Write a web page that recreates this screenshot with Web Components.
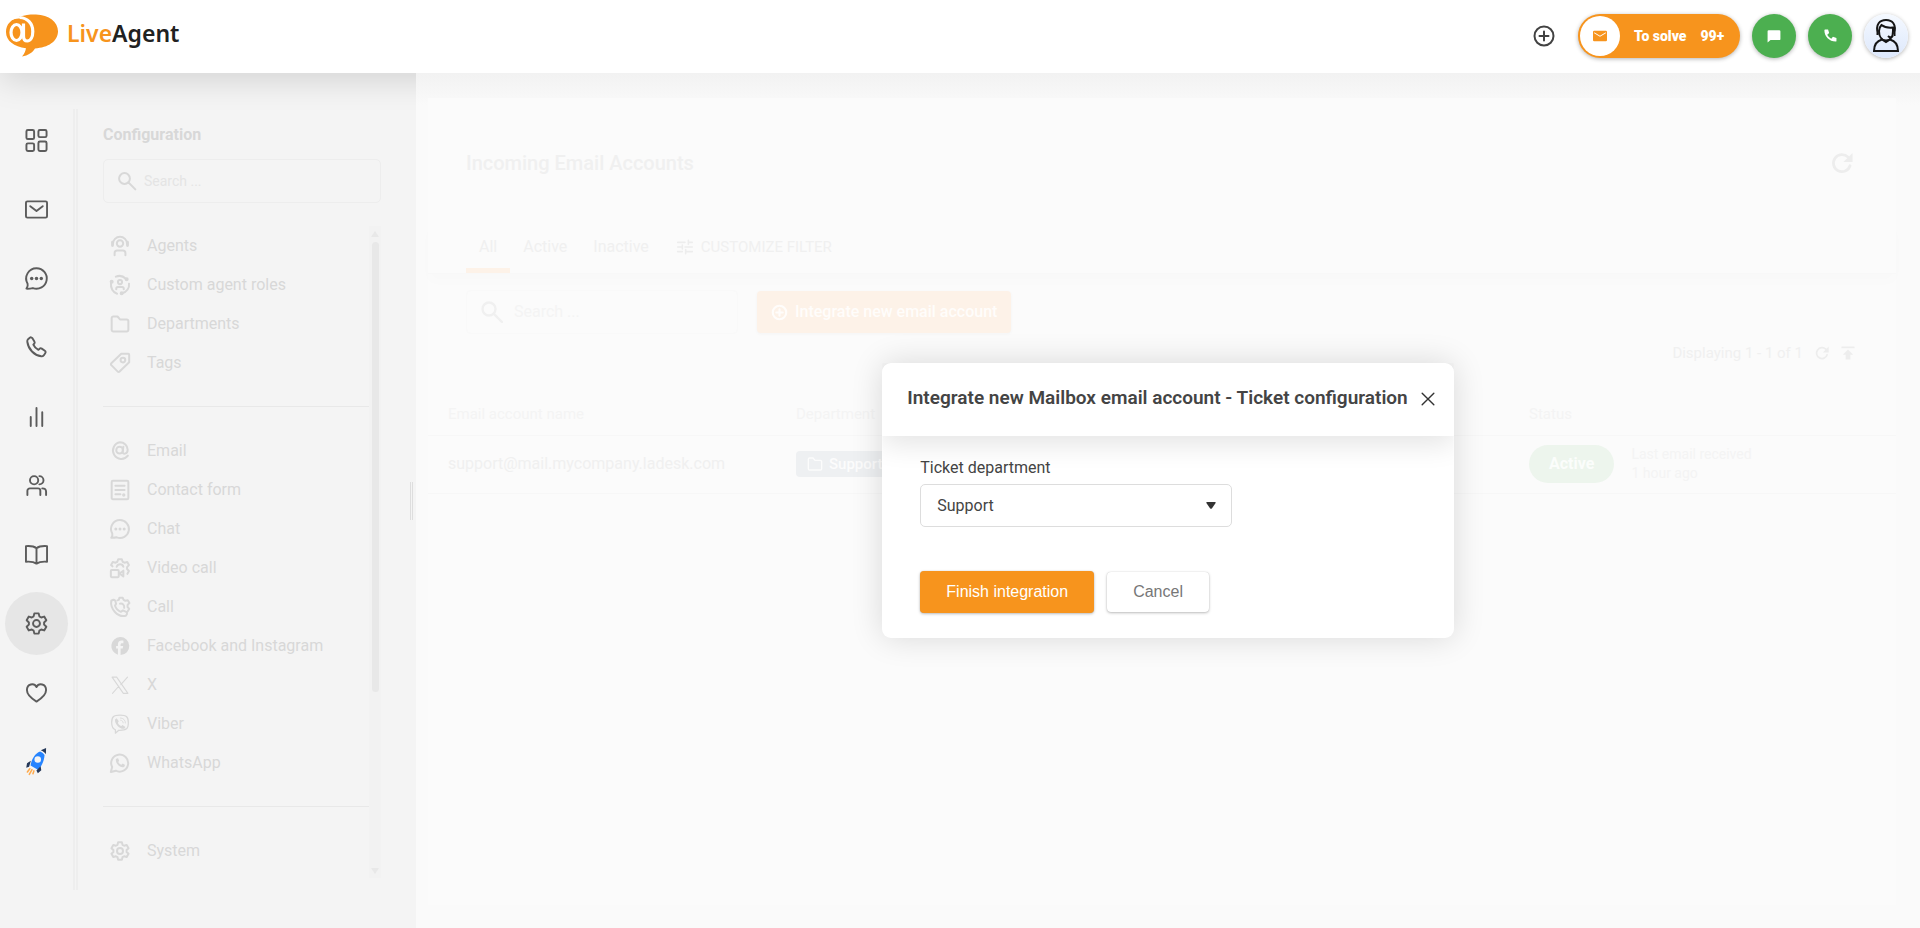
<!DOCTYPE html>
<html lang="en">
<head>
<meta charset="utf-8">
<title>LiveAgent</title>
<style>
  html, body {
    height: 100%;
    margin: 0;
  }

  body {
    font-family: Roboto, "Liberation Sans", sans-serif;
    font-size: 16px;
    line-height: 20px;
    color: #444;
    overflow: hidden;
  }
</style>
</head>
<body>
<la-app></la-app>

<script>
// Outline of a cog with six teeth, centred on the 24x24 grid.
function gearPath() {
  const points = [];
  for (let tooth = 0; tooth < 6; tooth++) {
    for (const [offset, radius] of [[-22, 8], [-12, 10.8], [12, 10.8], [22, 8]]) {
      const angle = (tooth * 60 + offset) * Math.PI / 180;
      points.push(`${(12 + radius * Math.sin(angle)).toFixed(2)} ${(12 - radius * Math.cos(angle)).toFixed(2)}`);
    }
  }
  return `<path d="M${points.join("L")}z"/>`;
}

const HANDSET = '<path d="M3.200 3.300l1.800-1.500c.9-.7 2-.5 2.600.4l2.200 3.500c.5.800.4 1.700-.2 2.400l-.9 1c.9 2.200 3 4.200 5.300 5.300l1-.9c.7-.7 1.700-.8 2.500-.3l3.200 2.200c.9.600 1.100 1.700.4 2.600L19.500 20.300c-.6.700-1.500 1-2.500.9C9.500 20 3.500 14 2.400 6c-.1-1 .1-2 .8-2.700z"/>';
const CHAT = '<path d="M12 1.300a10.700 10.700 0 1 1-3.800 20.700c-1.800.4-4 .7-6.700.6 1.200-1.600 1.700-3.500 1.200-5.200A10.700 10.700 0 0 1 12 1.300z"/><g fill="currentColor" stroke="none"><circle cx="7" cy="12" r="1.800"/><circle cx="12" cy="12" r="1.800"/><circle cx="17" cy="12" r="1.800"/></g>';

// Line icons, drawn on a 24x24 grid with the current colour as stroke.
const ICONS = {
  dashboard: '<rect x="1.500" y="1" width="8" height="9.500" rx="1.500"/><rect x="14" y="1" width="8.500" height="7.500" rx="1.500"/><rect x="1.500" y="15" width="8" height="8" rx="1.500"/><rect x="14" y="13" width="8.500" height="10" rx="1.500"/>',
  mail: '<rect x="1" y="3.500" width="22" height="17" rx="1.500"/><path d="M5.500 8.500l6.500 5 6.500-5"/>',
  chat: CHAT,
  phone: HANDSET,
  chart: '<path d="M6 12.500V22M12 3v19M18 7.500V22"/>',
  users: '<circle cx="9.500" cy="6.500" r="4.300"/><path d="M15 2.200a4.300 4.300 0 0 1 0 8.600M2.500 22v-4.500a2.500 2.500 0 0 1 2.500-2.500h8.500a2.500 2.500 0 0 1 2.500 2.500V22M18 15c2.500 0 4 1 4 3.500V22"/>',
  book: '<path d="M12 5.500C9.500 3.500 5 3 1 3.300V19.500c4-.3 8.500.2 11 2 2.500-1.800 7-2.300 11-2V3.300C19 3 14.500 3.500 12 5.500zM12 5.500v16"/>',
  gear: gearPath() + '<circle cx="12" cy="12" r="3.600"/>',
  heart: '<path d="M12 21.500C7 18.500 2 14.500 2 9.500c0-6.500 7.500-8 10-3.200 2.500-4.800 10-3.300 10 3.200 0 5-5 9-10 12z"/>',
  rocket: '<g transform="translate(0 -1)"><g stroke="none"><path fill="#2684ff" d="M15.800 2.600c2.100 1 3.600 2.100 4.600 3.600-.3 5.300-2.400 10.800-6.500 15.600l-8.100-4.600C6.700 10.900 10.100 4.800 15.800 2.600z"/><path fill="#253858" d="M16.500 1.300L22-1l-.2 6.400c-1-1.700-3-3.200-5.300-4.100zM6.100 12.300l-4 2.500-.8 4.600 3-.9zM16.300 18l.7 4.200-3.600 3-1.500-2.800z"/><circle cx="13.300" cy="11" r="3.400" fill="#f4f4f4"/></g><path stroke="#ffab4d" stroke-width="1.600" d="M5 20.500l-2.500 3.500M7.300 21.500l-2.800 5M9.300 22.800l-1 3"/></g>',
  search: '<circle cx="9" cy="9" r="6.500"/><path d="M13.800 13.800L22 22"/>',
  agent: '<circle cx="12" cy="9" r="3.800"/><path d="M3.500 9.500a8.500 8.500 0 0 1 17 0M5.500 23v-2.500a3 3 0 0 1 3-3h7a3 3 0 0 1 3 3V23"/><path stroke-width="3.400" d="M3 7.500v4M21 7.500v4"/>',
  roles: '<circle cx="12" cy="8.500" r="2.500"/><path d="M7.500 17v-.5a2 2 0 0 1 2-2h5a2 2 0 0 1 2 2v.5M7 2a11 11 0 0 1 12 2.500M22.800 10.500c.7 4.500-2.500 10-8.300 11.500M8.500 22.500C3.500 21 .5 15.500 1.200 9.500"/><g fill="currentColor"><circle cx="20" cy="5" r="1.200"/><circle cx="14" cy="22" r="1.200"/><circle cx="2" cy="8" r="1.200"/></g>',
  folder: '<path d="M2 5A2 2 0 0 1 4 3h5l3 3.500h8a2 2 0 0 1 2 2V19a2 2 0 0 1-2 2H4a2 2 0 0 1-2-2z"/>',
  tag: '<path d="M13.500 1H22a1 1 0 0 1 1 1V11L11.500 22.300a1.500 1.500 0 0 1-2.200 0L1.600 14.600a1.500 1.500 0 0 1 0-2.200z"/><circle cx="15.500" cy="8.500" r="2.800"/>',
  at: '<circle cx="11.500" cy="11" r="4"/><path d="M16 7l-.8 6c-.4 3.500 6 3 6-2.500C21.200 5.500 17 1.600 12 1.600a10 10 0 1 0 9.500 16"/>',
  form: '<rect x="2" y="1" width="20" height="22" rx="1.500"/><path d="M6.500 7h11M6.500 12h11M6.500 17h6"/><circle cx="16.500" cy="18" r=".8" fill="currentColor"/>',
  video: '<path d="M3 10L1.300 8.500l2-3.600 3.500.7 2-1.100 1-3h4.400l1 3 2 1.100 3.500-.7 2 3.600-2.200 2.400v2.300l2.200 2.400-1.800 3.400M8 10.500c1.500-4 7-4 8 0"/><rect x="1" y="14.500" width="9.500" height="8.500" rx="1"/><path d="M11.500 18.700l4.500-3.500v7z"/>',
  call: '<path d="M1.500 4.500L4 3.300c1-.2 2 .5 2.300 1.300l1 3.400L6 10.500c1 3 4 6 7 7.300l2.500-1.700 3.900 1.700c1 .6 1.300 1.600 1 2.600L19 22.500C9 25 0 14 1.500 4.500zM9 4l1.500-.5.8-2.500h4l1 2.500 2 1 3-.7 2 3.400-2.200 2.300v2.500l2 2.200-1.800 3M12 8c3.500-.5 5.500 2 5 5"/>',
  facebook: '<path fill="currentColor" stroke="none" d="M12 1.200a10.800 10.800 0 0 0-2.500 21.200V15H7.300v-3h2.200v-1.700c0-3.300 1.600-4.800 4.700-4.800.6 0 1.500.1 1.900.2v2.900h-1.400c-1.500 0-2 .6-2 2V12h3.100l-.6 3h-2.500v7.800A10.800 10.800 0 0 0 12 1.200z"/>',
  x: '<path stroke-width="1.300" d="M2.500 2.500h5.500L21.500 22H16zM21 2.500l-8 9M10.500 13.500L3 22"/>',
  viber: '<path stroke-width="1.500" d="M12 1.300c-8 0-10 2.200-10 9 0 5.500 1.200 7.500 4.500 8.700v4l4-3.500c9.500.3 11.500-1.700 11.500-9.200 0-6.800-2-9-10-9z"/><path stroke="none" fill="currentColor" d="M6 6.500l2-1.300 2.500 3.500-1 1.700c.6 2 2 3.400 4 4.100l1.600-1.300 3.400 2.300-1.300 2.200C11.500 18.500 5.500 12 6 6.500z"/><path stroke-width="1" d="M12.500 4.800c3.500 0 6 2.500 6 6M12.800 7.500c2 .2 3 1.200 3 3.200"/>',
  whatsapp: '<path d="M1 22.800l1.600-5.900A10.200 10.200 0 1 1 7 21.200z"/><path stroke="none" fill="currentColor" d="M7 7.500l1.500-1.200 1.400.3 1 2.700-1 1.500c1 1.700 2 2.600 3.800 3.400l1.500-1.500 2.600 1.300c.3 2-1 3-2.800 3C11 17 6.500 12 7 7.500z"/>',
  plus: '<circle cx="12" cy="12" r="9.500"/><path d="M12 7.500v9M7.500 12h9"/>',
  tune: '<path d="M1 5h11M17 5h6M17 2v6M1 12h6M12 12h11M8 9v6M1 19h7M13 19h10M13 16v6"/>',
  refresh: '<path d="M20.800 15A9.300 9.300 0 1 1 18.500 5.500"/><path stroke="none" fill="currentColor" d="M23.500 1V11h-10z"/>',
  top: '<path d="M2 2.500h20"/><path stroke="none" fill="currentColor" d="M12 6l9 9h-5v8H8v-8H3z"/>',
  close: '<path d="M2 2l20 20M22 2L2 22"/>',
  envelope: '<path stroke="none" fill="currentColor" fill-rule="evenodd" d="M2 3h20a2 2 0 0 1 2 2v14a2 2 0 0 1-2 2H2a2 2 0 0 1-2-2V5a2 2 0 0 1 2-2zm0 2.500v1.800l10 6 10-6V5.500l-10 6z"/>',
  bubble: '<path stroke="none" fill="currentColor" d="M3 2h18a2 2 0 0 1 2 2v13a2 2 0 0 1-2 2H6l-5 4V4a2 2 0 0 1 2-2z"/>',
  handset: '<path stroke="none" fill="currentColor" d="M2 1h5.500l2 6.500-3.500 3c1.500 3 4.500 6 7.500 7.500l3-3.500L23 16.500V22c0 .8-.5 1.300-1.500 1.300C10 23.300.7 14 .7 2.500.7 1.500 1.200 1 2 1z"/>'
};

class Icon extends HTMLElement {
  constructor() {
    super();
    this.attachShadow({mode: "open"});
  }

  connectedCallback() {
    const size = this.getAttribute("size") || 24;
    const weight = this.getAttribute("weight") || 2;
    this.shadowRoot.innerHTML = `
    <style>
      :host {
        display: flex;
        flex: none;
      }

      svg {
        display: block;
        overflow: visible;
        fill: none;
        stroke: currentColor;
        stroke-linecap: round;
        stroke-linejoin: round;
      }
    </style>
    <svg width="${size}" height="${size}" viewBox="0 0 24 24" stroke-width="${weight}" aria-hidden="true">${ICONS[this.getAttribute("name")]}</svg>
    `;
  }
}

class Logo extends HTMLElement {
  constructor() {
    super();
    this.attachShadow({mode: "open"});
    this.shadowRoot.innerHTML = `
    <style>
      :host {
        display: block;
      }

      a {
        display: flex;
        align-items: center;
        gap: 8px;
        color: #212121;
        font: 600 23px/28px "Noto Sans", "Open Sans", sans-serif;
        text-decoration: none;
      }

      .live {
        color: #f7941d;
      }

      .name {
        padding-bottom: 6px;
      }
    </style>
    <a href="#">
      <svg width="53" height="43" viewBox="0 0 53 43" aria-hidden="true">
        <path fill="#f7941d" d="M14 2.500C19 .9 25 .3 30 .5 43 1 52 8 52 17.300c0 10-10 16.500-23 17.100C27 38 22 41.500 16 42.500c2-2.500 3.500-5 4-8.300C8 32.500 0 27 0 18 0 10 5 5.500 14 2.500z"/>
        <g fill="none" stroke="#fff">
          <ellipse cx="10.500" cy="18.500" rx="5.500" ry="8" stroke-width="3.200"/>
          <path stroke-width="3.200" d="M17.500 9.500V22c0 3.500 1.200 5 3.700 5 3.500 0 5.600-4 5.600-9.500 0-8-5.300-13.500-13-14"/>
          <path stroke-width="2" d="M5 5.500C8 3.600 11 3.300 14 3.500"/>
        </g>
      </svg>
      <span class="name"><span class="live">Live</span>Agent</span>
    </a>
    `;
  }
}

class TopBar extends HTMLElement {
  constructor() {
    super();
    this.attachShadow({mode: "open"});
    this.shadowRoot.innerHTML = `
    <style>
      :host {
        display: flex;
        align-items: center;
        justify-content: space-between;
        height: 73px;
        padding: 0 12px 2px 6px;
        box-sizing: border-box;
        background: #fff;
        box-shadow: 0 8px 32px rgba(0, 0, 0, 0.13);
        position: relative;
        z-index: 3;
      }

      .actions {
        display: flex;
        align-items: center;
        gap: 12px;
      }

      button {
        display: flex;
        align-items: center;
        justify-content: center;
        width: 44px;
        height: 44px;
        padding: 0;
        border: 0;
        border-radius: 22px;
        font: inherit;
        color: #fff;
        box-shadow: 0 1px 4px rgba(0, 0, 0, 0.3);
      }

      .add {
        background: none;
        box-shadow: none;
        color: #424242;
      }

      .solve {
        justify-content: flex-start;
        gap: 14px;
        width: 162px;
        padding: 0 2px;
        box-sizing: border-box;
        background: #f7941d;
        font-size: 14px;
        font-weight: 900;
        white-space: nowrap;
      }

      .solve la-icon {
        width: 40px;
        height: 40px;
        align-items: center;
        justify-content: center;
        border-radius: 50%;
        background: #fff;
        color: #f7941d;
      }

      .round {
        background: #4caf50;
      }

      .avatar {
        background: linear-gradient(#f5f9ff, #dde8fc);
      }
    </style>
    <la-logo></la-logo>
    <div class="actions">
      <button class="add" aria-label="Create"><la-icon name="plus" size="24"></la-icon></button>
      <button class="solve"><la-icon name="envelope" size="14"></la-icon><span>To solve</span><span>99+</span></button>
      <button class="round" aria-label="Chats"><la-icon name="bubble" size="14"></la-icon></button>
      <button class="round" aria-label="Calls"><la-icon name="handset" size="13"></la-icon></button>
      <button class="avatar" aria-label="Profile">
        <svg width="28" height="34" viewBox="0 0 28 34" fill="none" stroke="#151515" stroke-width="2" aria-hidden="true">
          <path d="M2 32c0-6 2.500-10 8-11.500L14 23l4-2.500c5.500 1.500 8 5.500 8 11.500z"/>
          <path d="M7 12c0 6 3 9.500 7 9.500s7-3.500 7-9.500V8.500c-5 .5-9-.5-11.500-2.500C8 7.500 7 9 7 12z"/>
          <path d="M6 15C3 5 8 1 14 1s11 4 8 14M22.500 11v6M21 17c-2 2.500-4 1-5 0M5.500 11v5"/>
        </svg>
      </button>
    </div>
    `;
  }
}

class NavRail extends HTMLElement {
  constructor() {
    super();
    this.attachShadow({mode: "open"});
    const items = [
      ["dashboard", "Dashboard"], ["mail", "Tickets"], ["chat", "Chats"], ["phone", "Calls"], ["chart", "Reports"],
      ["users", "Customers"], ["book", "Knowledge base"], ["gear", "Configuration"], ["heart", "Favourites"], ["rocket", "Getting started"]
    ];
    this.shadowRoot.innerHTML = `
    <style>
      :host {
        display: flex;
        padding: 36px 0 38px;
        background: #f4f4f4;
      }

      nav {
        display: flex;
        flex-direction: column;
        gap: 6px;
        padding: 0 5px;
      }

      a {
        display: flex;
        align-items: center;
        justify-content: center;
        width: 63px;
        height: 63px;
        padding-bottom: 1px;
        box-sizing: border-box;
        border-radius: 50%;
        color: #5c5c5c;
      }

      a.active {
        background: #e6e6e6;
      }

      .edge {
        width: 1px;
        border: solid #eee;
        border-width: 0 2px;
      }
    </style>
    <nav>
      ${items.map(([icon, label]) => `<a href="#${icon}" aria-label="${label}"${icon === "gear" ? ' class="active"' : ""}><la-icon name="${icon}" size="23"></la-icon></a>`).join("")}
    </nav>
    <div class="edge"></div>
    `;
  }
}

class SearchBox extends HTMLElement {
  constructor() {
    super();
    this.attachShadow({mode: "open"});
  }

  connectedCallback() {
    this.shadowRoot.innerHTML = `
    <style>
      :host {
        display: flex;
        align-items: center;
        height: 44px;
        gap: var(--gap, 7px);
        padding: 0 13px;
        box-sizing: border-box;
        border: 1px solid var(--line, #ededed);
        border-radius: 5px;
      }

      input {
        flex: 1;
        min-width: 0;
        border: 0;
        padding: 0;
        background: none;
        font: inherit;
        color: inherit;
        outline: none;
      }

      input::placeholder {
        color: var(--hint, #e4e4e4);
        opacity: 1;
      }
    </style>
    <la-icon name="search" size="${this.getAttribute("icon-size") || 20}" weight="2.4"></la-icon>
    <input type="search" placeholder="Search ..." aria-label="Search">
    `;
  }
}

class ConfigMenu extends HTMLElement {
  constructor() {
    super();
    this.attachShadow({mode: "open"});
    const groups = [
      [["agent", "Agents"], ["roles", "Custom agent roles"], ["folder", "Departments"], ["tag", "Tags"]],
      [["at", "Email"], ["form", "Contact form"], ["chat", "Chat"], ["video", "Video call"], ["call", "Call"],
       ["facebook", "Facebook and Instagram"], ["x", "X"], ["viber", "Viber"], ["whatsapp", "WhatsApp"]],
      [["gear", "System"]]
    ];
    this.shadowRoot.innerHTML = `
    <style>
      :host {
        display: flex;
        width: 338px;
        background: #f4f4f4;
        color: #d8d8d8;
      }

      .body {
        flex: 1;
        display: flex;
        flex-direction: column;
        padding: 52px 29px 50px 25px;
      }

      h2 {
        margin: 0 0 14px;
        font-size: 16px;
        font-weight: 700;
      }

      la-search {
        font-size: 14px;
        margin-bottom: 23px;
      }

      .scroller {
        flex: 1;
        min-height: 0;
        display: flex;
      }

      nav {
        flex: 1;
      }

      ul {
        list-style: none;
        margin: 0;
        padding: 0;
      }

      ul + ul {
        margin-top: 24px;
        padding-top: 24px;
        border-top: 1px solid #e8e8e8;
      }

      a {
        display: flex;
        align-items: center;
        gap: 17px;
        height: 39px;
        padding-left: 7px;
        color: inherit;
        text-decoration: none;
      }

      .bar {
        display: flex;
        flex-direction: column;
        align-items: center;
        width: 12px;
        background: #f2f2f2;
      }

      .bar i {
        width: 0;
        height: 0;
        border: 4px solid transparent;
      }

      .bar .up {
        border-bottom: 6px solid #e8e8e8;
        border-top: 0;
        margin: 5px 0;
      }

      .bar .down {
        border-top: 6px solid #e8e8e8;
        border-bottom: 0;
        margin: auto 0 4px;
      }

      .thumb {
        width: 7px;
        flex: 0 0 69%;
        border-radius: 4px;
        background: #e8e8e8;
      }

      .grip {
        align-self: center;
        width: 1px;
        height: 38px;
        margin-right: 3px;
        border: solid #dedede;
        border-width: 0 1px;
      }
    </style>
    <div class="body">
      <h2>Configuration</h2>
      <la-search></la-search>
      <div class="scroller">
        <nav>
          ${groups.map(group => `<ul>${group.map(([icon, label]) => `<li><a href="#${icon}"><la-icon name="${icon}" size="20" weight="2.4"></la-icon>${label}</a></li>`).join("")}</ul>`).join("")}
        </nav>
        <div class="bar"><i class="up"></i><div class="thumb"></div><i class="down"></i></div>
      </div>
    </div>
    <div class="grip"></div>
    `;
  }
}

class AccountsPage extends HTMLElement {
  constructor() {
    super();
    this.attachShadow({mode: "open"});
    this.shadowRoot.innerHTML = `
    <style>
      :host {
        display: block;
        padding: 25px 24px 23px 12px;
        box-sizing: border-box;
        height: 100%;
        background: linear-gradient(#f2f2f2, #fafafa 32px);
        color: #f0f0f0;
      }

      la-icon {
        color: #ededed;
      }

      .panel {
        height: 100%;
        background: #fbfbfb;
      }

      header {
        display: flex;
        align-items: center;
        justify-content: space-between;
        padding: 52px 43px 0 38px;
      }

      h1 {
        margin: 0;
        font-size: 20px;
        line-height: 26px;
        font-weight: 500;
      }

      button {
        display: flex;
        align-items: center;
        border: 0;
        padding: 0;
        background: none;
        color: inherit;
        font: inherit;
      }

      .tabs {
        display: flex;
        margin-top: 45px;
        padding-left: 38px;
        border-bottom: 1px solid #f8f8f8;
        box-shadow: 0 8px 12px rgba(0, 0, 0, 0.01);
      }

      .tabs button {
        height: 52px;
        padding: 4px 13px 0;
        box-sizing: border-box;
        border-bottom: 5px solid transparent;
      }

      .tabs button.active {
        border-bottom-color: #fdf2e8;
      }

      .tabs .filter {
        gap: 8px;
        padding: 4px 15px 0;
        font-size: 15px;
      }

      .tools {
        display: flex;
        align-items: center;
        gap: 19px;
        padding: 16px 38px 0;
      }

      la-search {
        width: 272px;
        --line: #f9f9f9;
        --hint: #f4f4f4;
        --gap: 10px;
      }

      .tools button {
        gap: 7px;
        height: 42px;
        padding: 0 14px;
        border-radius: 4px;
        background: #fdf2e8;
        color: #fffdfb;
        font-weight: 500;
        box-shadow: 0 1px 3px #f4f4f4;
      }

      .tools button la-icon, .tag la-icon {
        color: inherit;
      }

      .paging {
        display: flex;
        align-items: center;
        justify-content: flex-end;
        gap: 12px;
        padding: 9px 41px 0;
        font-size: 15px;
      }

      table {
        width: 100%;
        margin-top: 30px;
        border-collapse: collapse;
        table-layout: fixed;
        text-align: left;
      }

      th, td {
        padding: 0 0 0 20px;
        box-sizing: border-box;
        border-bottom: 1px solid #f7f7f7;
      }

      th {
        height: 42px;
        font-size: 15px;
        font-weight: 400;
        color: #f4f4f4;
      }

      .name {
        width: 348px;
      }

      .state {
        width: 387px;
      }

      td {
        height: 58px;
      }

      .tag {
        display: inline-flex;
        align-items: center;
        gap: 6px;
        height: 26px;
        padding: 0 11px;
        border-radius: 4px;
        background: #eef0f2;
        color: #fcfcfc;
        font-size: 15px;
        font-weight: 500;
      }

      .status {
        display: flex;
        align-items: center;
        gap: 17px;
        font-size: 14px;
        line-height: 19px;
        color: #f4f4f4;
      }

      .status b {
        padding: 9px 20px;
        border-radius: 19px;
        background: #edf5ed;
        color: #fbfdfb;
        font-size: 16px;
        line-height: 20px;
        font-weight: 700;
      }
    </style>
    <div class="panel">
      <header>
        <h1>Incoming Email Accounts</h1>
        <button aria-label="Refresh"><la-icon name="refresh" size="22" weight="3"></la-icon></button>
      </header>
      <div class="tabs">
        <button class="active">All</button>
        <button>Active</button>
        <button>Inactive</button>
        <button class="filter"><la-icon name="tune" size="16" weight="2.4"></la-icon>CUSTOMIZE FILTER</button>
      </div>
      <div class="tools">
        <la-search icon-size="24"></la-search>
        <button><la-icon name="plus" size="17" weight="3"></la-icon>Integrate new email account</button>
      </div>
      <div class="paging">
        <span>Displaying 1 - 1 of 1</span>
        <button aria-label="Reload list"><la-icon name="refresh" size="14" weight="3"></la-icon></button>
        <button aria-label="Back to top"><la-icon name="top" size="14" weight="3"></la-icon></button>
      </div>
      <table>
        <thead>
          <tr><th class="name">Email account name</th><th>Department</th><th class="state">Status</th></tr>
        </thead>
        <tbody>
          <tr>
            <td>support@mail.mycompany.ladesk.com</td>
            <td><span class="tag"><la-icon name="folder" size="16"></la-icon>Support</span></td>
            <td><div class="status"><b>Active</b><span>Last email received<br>1 hour ago</span></div></td>
          </tr>
        </tbody>
      </table>
    </div>
    `;
  }
}

class Modal extends HTMLElement {
  constructor() {
    super();
    this.attachShadow({mode: "open"});
    this.shadowRoot.innerHTML = `
    <style>
      :host {
        display: block;
        border-radius: 9px;
        background: #fff;
        box-shadow: 0 0 32px rgba(0, 0, 0, 0.14);
      }

      header {
        display: flex;
        align-items: center;
        gap: 13px;
        height: 73px;
        padding: 0 19px 2px 25px;
        box-sizing: border-box;
        box-shadow: 0 8px 28px rgba(0, 0, 0, 0.11);
        border-radius: 9px 9px 0 0;
        clip-path: inset(0 0 -60px 0);
      }

      h2 {
        margin: 0;
        padding-bottom: 2px;
        font-size: 19px;
        font-weight: 600;
        line-height: 24px;
        white-space: nowrap;
      }

      button {
        display: flex;
        padding: 0;
        border: 0;
        background: none;
        color: #333;
      }

      .content {
        padding: 22px 38px 25px;
      }
    </style>
    <header>
      <h2><slot name="title"></slot></h2>
      <button aria-label="Close"><la-icon name="close" size="14" weight="2.4"></la-icon></button>
    </header>
    <div class="content"><slot></slot></div>
    `;
  }
}

class TicketForm extends HTMLElement {
  constructor() {
    super();
    this.attachShadow({mode: "open"});
    this.shadowRoot.innerHTML = `
    <style>
      :host {
        display: block;
      }

      label {
        display: block;
        margin-bottom: 6px;
      }

      .select {
        display: grid;
        align-items: center;
        width: 312px;
      }

      .select > * {
        grid-area: 1 / 1;
      }

      select {
        appearance: none;
        height: 43px;
        padding: 0 16px;
        border: 1px solid #ddd;
        border-radius: 5px;
        background: #fff;
        font: inherit;
        color: inherit;
      }

      .select svg {
        justify-self: end;
        margin-right: 16px;
        pointer-events: none;
      }

      .buttons {
        display: flex;
        align-items: center;
        gap: 13px;
        margin-top: 44px;
      }

      button {
        height: 42px;
        padding: 0 26px;
        border: 0;
        border-radius: 4px;
        background: #f7941d;
        font: 16px/20px "Liberation Sans", sans-serif;
        color: #fff;
        box-shadow: 0 0 1px rgba(0, 0, 0, 0.2), 0 1px 3px rgba(0, 0, 0, 0.26);
      }

      .plain {
        height: 40px;
        background: #fff;
        color: #777;
      }
    </style>
    <label for="department">Ticket department</label>
    <div class="select">
      <select id="department"><option>Support</option></select>
      <svg width="10" height="7" viewBox="0 0 10 7" aria-hidden="true"><path fill="#333" d="M1 0h8q1 0 .6 1L6 6.200q-1 1-2 0L.4 1Q0 0 1 0z"/></svg>
    </div>
    <div class="buttons">
      <button>Finish integration</button>
      <button class="plain">Cancel</button>
    </div>
    `;
  }
}

class App extends HTMLElement {
  constructor() {
    super();
    this.attachShadow({mode: "open"});
    this.shadowRoot.innerHTML = `
    <style>
      :host {
        display: flex;
        flex-direction: column;
        height: 100%;
      }

      .work {
        flex: 1;
        min-height: 0;
        display: flex;
      }

      main {
        flex: 1;
        min-width: 0;
        display: grid;
        z-index: 4;
      }

      main > * {
        grid-area: 1 / 1;
      }

      la-modal {
        place-self: center;
      }
    </style>
    <la-top-bar></la-top-bar>
    <div class="work">
      <la-nav-rail></la-nav-rail>
      <la-config-menu></la-config-menu>
      <main>
        <la-accounts></la-accounts>
        <la-modal role="dialog">
          <span slot="title">Integrate new Mailbox email account - Ticket configuration</span>
          <la-ticket-form></la-ticket-form>
        </la-modal>
      </main>
    </div>
    `;
  }
}

customElements.define("la-icon", Icon);
customElements.define("la-logo", Logo);
customElements.define("la-top-bar", TopBar);
customElements.define("la-nav-rail", NavRail);
customElements.define("la-search", SearchBox);
customElements.define("la-config-menu", ConfigMenu);
customElements.define("la-accounts", AccountsPage);
customElements.define("la-modal", Modal);
customElements.define("la-ticket-form", TicketForm);
customElements.define("la-app", App);
</script>
</body>
</html>
